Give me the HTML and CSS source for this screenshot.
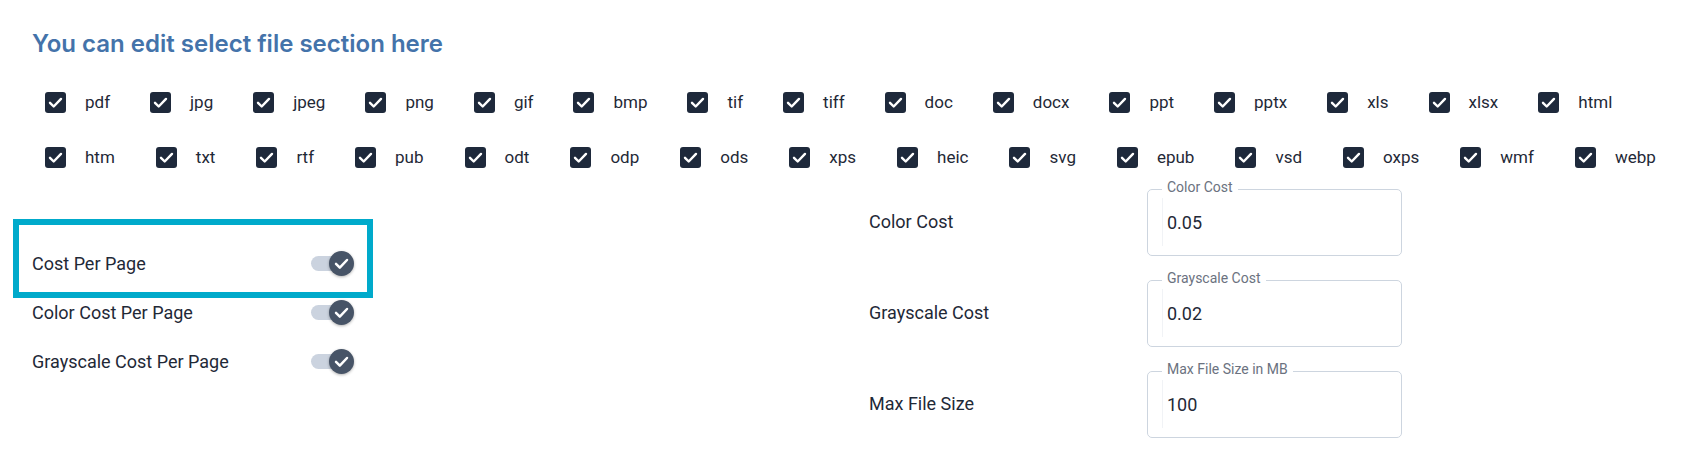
FILE: index.html
```html
<!DOCTYPE html>
<html lang="en">
<head>
    <meta charset="UTF-8">
    <meta name="viewport" content="width=device-width, initial-scale=1.0">
    <title>File Settings</title>
    <link rel="stylesheet" href="styles.css">
</head>
<body>
    <div class="page">
        <h2 class="title">You can edit select file section here</h2>

        <div class="types">
            <div class="type-row" id="rowOne"></div>
            <div class="type-row wide" id="rowTwo"></div>
        </div>

        <div class="settings">
            <div class="toggles">
                <div class="toggle-row first">
                    <span class="highlight"></span>
                    <span>Cost Per Page</span>
                    <span class="switch"><span class="track"></span><span class="knob"><svg width="25" height="25" viewBox="0 0 25 25"><polyline points="7,12.8 10.8,16.6 18,9" fill="none" stroke="#fff" stroke-width="2.5" stroke-linecap="round" stroke-linejoin="round"/></svg></span></span>
                </div>
                <div class="toggle-row">
                    <span>Color Cost Per Page</span>
                    <span class="switch"><span class="track"></span><span class="knob"><svg width="25" height="25" viewBox="0 0 25 25"><polyline points="7,12.8 10.8,16.6 18,9" fill="none" stroke="#fff" stroke-width="2.5" stroke-linecap="round" stroke-linejoin="round"/></svg></span></span>
                </div>
                <div class="toggle-row">
                    <span>Grayscale Cost Per Page</span>
                    <span class="switch"><span class="track"></span><span class="knob"><svg width="25" height="25" viewBox="0 0 25 25"><polyline points="7,12.8 10.8,16.6 18,9" fill="none" stroke="#fff" stroke-width="2.5" stroke-linecap="round" stroke-linejoin="round"/></svg></span></span>
                </div>
            </div>

            <div class="costs">
                <div class="cost-row">
                    <label class="cost-label" for="colorCost">Color Cost</label>
                    <fieldset class="field">
                        <legend>Color Cost</legend>
                        <input type="text" id="colorCost" value="0.05">
                    </fieldset>
                </div>
                <div class="cost-row">
                    <label class="cost-label" for="grayCost">Grayscale Cost</label>
                    <fieldset class="field">
                        <legend>Grayscale Cost</legend>
                        <input type="text" id="grayCost" value="0.02">
                    </fieldset>
                </div>
                <div class="cost-row">
                    <label class="cost-label" for="maxSize">Max File Size</label>
                    <fieldset class="field">
                        <legend>Max File Size in MB</legend>
                        <input type="text" id="maxSize" value="100">
                    </fieldset>
                </div>
            </div>
        </div>
    </div>

    <script>
        const rowOne = ['pdf', 'jpg', 'jpeg', 'png', 'gif', 'bmp', 'tif', 'tiff', 'doc', 'docx', 'ppt', 'pptx', 'xls', 'xlsx', 'html'];
        const rowTwo = ['htm', 'txt', 'rtf', 'pub', 'odt', 'odp', 'ods', 'xps', 'heic', 'svg', 'epub', 'vsd', 'oxps', 'wmf', 'webp'];

        function fillRow(id, types) {
            const row = document.getElementById(id);
            types.forEach((type) => {
                const item = document.createElement('label');
                item.className = 'type';
                item.innerHTML = '<span class="box"><svg width="21" height="21" viewBox="0 0 21 21">' +
                    '<polyline points="5,10.8 8.7,14.5 16,6.9" fill="none" stroke="#fff" stroke-width="2.4" stroke-linecap="round" stroke-linejoin="round"/>' +
                    '</svg></span><span>' + type + '</span>';
                row.appendChild(item);
            });
        }

        fillRow('rowOne', rowOne);
        fillRow('rowTwo', rowTwo);
    </script>
</body>
</html>
```

FILE: styles.css
```css
body {
    margin: 0;
    padding: 0;
    background-color: #fff;
    font-family: Roboto, "Liberation Sans", sans-serif;
    color: #1f2937;
}

.page {
    padding: 30px 32px 0 32px;
}

.title {
    margin: 0;
    font-family: Inter, Roboto, sans-serif;
    font-size: 24px;
    line-height: 28px;
    font-weight: 600;
    color: #4473aa;
}

.types {
    margin-top: 34px;
    padding-left: 13px;
}

.type-row {
    display: flex;
    gap: 40px;
    margin-bottom: 34px;
}

.type-row.wide {
    gap: 41px;
}

.type-row:last-child {
    margin-bottom: 0;
}

.type {
    display: flex;
    align-items: center;
    gap: 19px;
    font-size: 17px;
    line-height: 21px;
    color: #1f2937;
}

.box {
    width: 21px;
    height: 21px;
    border-radius: 3px;
    background-color: #1e293b;
    display: block;
}

.box svg {
    display: block;
}

.settings {
    display: flex;
    margin-top: 12px;
}

.toggles {
    width: 837px;
    padding-top: 59px;
}

.toggle-row {
    position: relative;
    width: 322px;
    height: 49px;
    display: flex;
    align-items: center;
    justify-content: space-between;
    font-size: 18px;
}

.highlight {
    position: absolute;
    left: -19px;
    top: -20px;
    width: 360px;
    height: 79px;
    box-sizing: border-box;
    border: 6px solid #00aacb;
}

.switch {
    position: relative;
    width: 43px;
    height: 25px;
    display: block;
}

.track {
    position: absolute;
    left: 0;
    top: 5px;
    width: 34px;
    height: 15px;
    border-radius: 8px;
    background-color: #cbd3df;
}

.knob {
    position: absolute;
    right: 0;
    top: 0;
    width: 25px;
    height: 25px;
    border-radius: 50%;
    background-color: #475467;
    box-shadow: 0 1px 3px rgba(0, 0, 0, 0.3);
}

.knob svg {
    display: block;
}

.costs {
    display: flex;
    flex-direction: column;
    gap: 15px;
}

.cost-row {
    display: flex;
    align-items: center;
}

.cost-label {
    width: 278px;
    padding-top: 6px;
    font-size: 18px;
    line-height: 21px;
}

.field {
    width: 255px;
    box-sizing: border-box;
    margin: 0;
    padding: 0 0 9px 14px;
    border: 1px solid #cdd5df;
    border-radius: 5px;
}

.field legend {
    padding: 0 5px 4px 5px;
    font-size: 14px;
    line-height: 14px;
    color: #6b7280;
}

.field input {
    display: block;
    width: 100%;
    height: 48px;
    box-sizing: border-box;
    margin: 0;
    padding: 0 0 0 4px;
    border: none;
    border-left: 1px solid #f1f3f6;
    outline: none;
    background: transparent;
    font-family: Roboto, "Liberation Sans", sans-serif;
    font-size: 18px;
    color: #1f2937;
}
```
